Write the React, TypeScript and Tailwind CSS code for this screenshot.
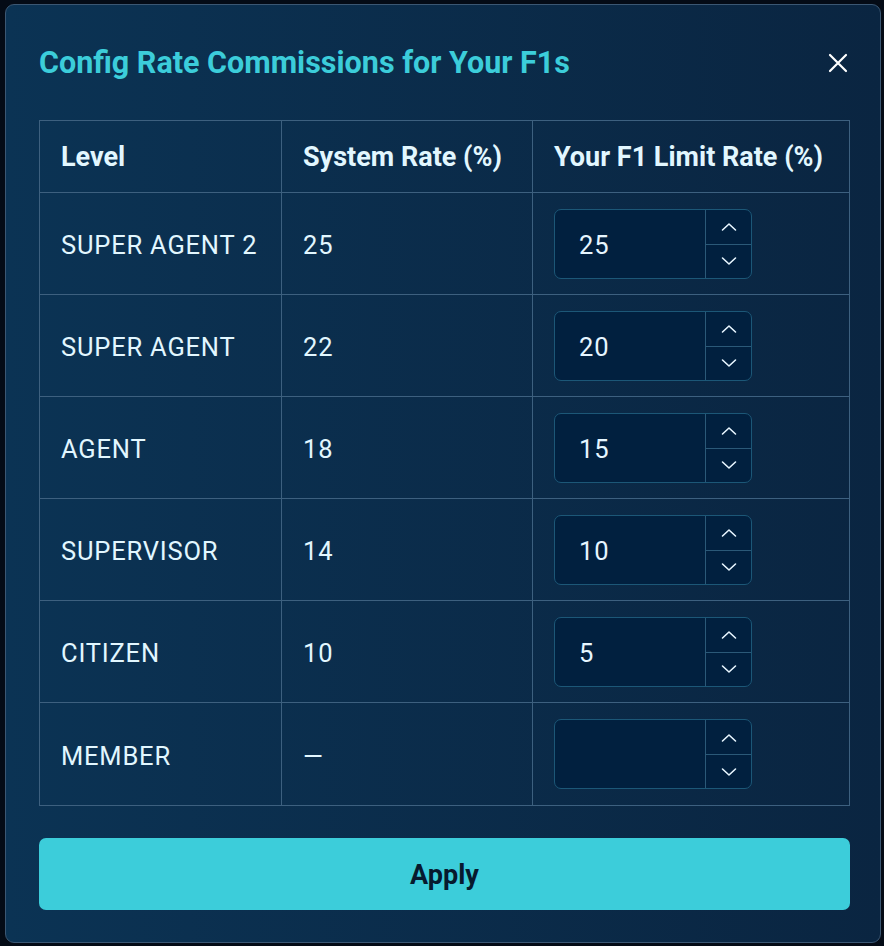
import React from "react";

const rows = [
  { level: "SUPER AGENT 2", sys: "25", val: "25" },
  { level: "SUPER AGENT", sys: "22", val: "20" },
  { level: "AGENT", sys: "18", val: "15" },
  { level: "SUPERVISOR", sys: "14", val: "10" },
  { level: "CITIZEN", sys: "10", val: "5" },
  { level: "MEMBER", sys: "—", val: "" },
];

function Chevron({ up }: { up?: boolean }) {
  return (
    <svg width="18" height="10" viewBox="0 0 18 10" fill="none">
      <path
        d={up ? "M2.5 8 L9 2 L15.5 8" : "M2.5 2 L9 8 L15.5 2"}
        stroke="#e8f6ff"
        strokeWidth="1.6"
        strokeLinecap="round"
        strokeLinejoin="round"
      />
    </svg>
  );
}

function NumberInput({ value }: { value: string }) {
  return (
    <div className="flex h-[70px] w-[198px] overflow-hidden rounded-[7px] border border-[#1c5777] bg-[#01203f]">
      <div className="flex flex-1 items-center pl-6 pt-[3px] text-[25.5px] tracking-[0.8px] text-[#e6f6ff]">{value}</div>
      <div className="flex w-[46px] flex-col border-l border-[#2b5978]">
        <div className="flex flex-1 items-center justify-center border-b border-[#2b5978] pt-[1px]">
          <Chevron up />
        </div>
        <div className="flex flex-1 items-center justify-center">
          <Chevron />
        </div>
      </div>
    </div>
  );
}

export default function App() {
  return (
    <div
      className="h-[946px] w-[884px] bg-[#040b16] pl-[5px] pt-[4px]"
      style={{ fontFamily: "Roboto, 'Open Sans', sans-serif" }}
    >
      <div className="flex h-[939px] w-[876px] flex-col rounded-[9px] border border-[#3b5773] bg-gradient-to-r from-[#0b3354] to-[#0a2541] pl-[33px]">
        <div className="flex h-[115px] items-center pr-[33px]">
          <h1 className="flex-1 text-[30.5px] font-bold text-[#3ccdda]">
            Config Rate Commissions for Your F1s
          </h1>
          <svg width="22" height="22" viewBox="0 0 22 22" className="mr-[-2px]">
            <path d="M3 3 L19 19 M19 3 L3 19" stroke="#ffffff" strokeWidth="2.2" strokeLinecap="round" />
          </svg>
        </div>
        <div className="w-[811px] border border-[#3d607f]">
          <div className="grid h-[72px] grid-cols-[242px_251px_1fr] border-b border-[#3d607f] text-[27px] font-bold text-[#e2f7ff]">
            <div className="flex items-center border-r border-[#3d607f] pl-[21px] pt-[2px]">Level</div>
            <div className="flex items-center border-r border-[#3d607f] pl-[21px] pt-[2px]">System Rate (%)</div>
            <div className="flex items-center pl-[21px] pt-[2px]">Your F1 Limit Rate (%)</div>
          </div>
          {rows.map((r, i) => (
            <div
              key={r.level}
              className={`grid h-[102px] grid-cols-[242px_251px_1fr] text-[25.5px] tracking-[0.8px] text-[#e2f7ff] ${
                i < rows.length - 1 ? "border-b border-[#3d607f]" : ""
              }`}
            >
              <div className="flex items-center border-r border-[#3d607f] pl-[21px] pt-[4px]">{r.level}</div>
              <div className="flex items-center border-r border-[#3d607f] pl-[21px] pt-[4px]">{r.sys}</div>
              <div className="flex items-center pl-[21px]">
                <NumberInput value={r.val} />
              </div>
            </div>
          ))}
        </div>
        <button className="mt-[32px] flex h-[72px] w-[811px] items-center justify-center rounded-[7px] bg-[#3ccdda] pt-[3px] text-[27px] font-bold text-[#071a2e]">
          Apply
        </button>
      </div>
    </div>
  );
}
